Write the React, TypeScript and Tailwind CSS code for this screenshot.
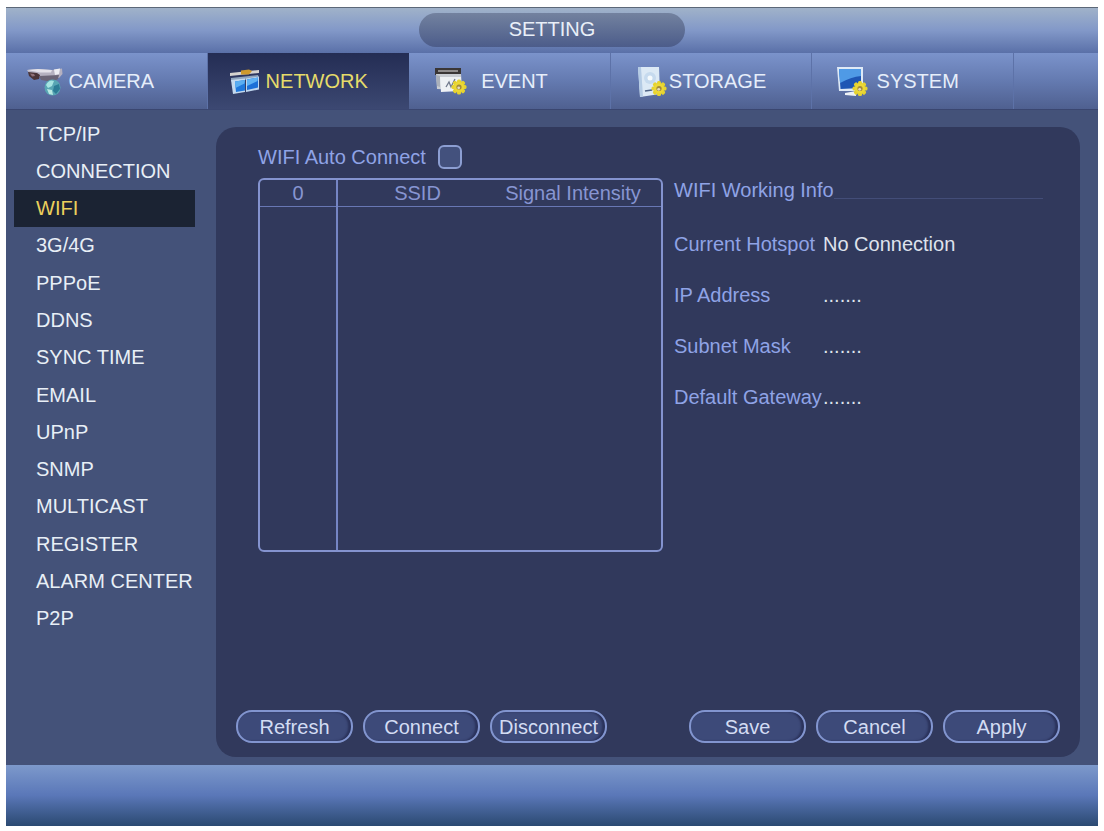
import React, { useState } from 'react';
import { cva } from 'class-variance-authority';
import { clsx } from 'clsx';

function Gear({ x, y }: { x: number; y: number }) {
  return (
    <g transform={`translate(${x} ${y})`}>
      {[0, 45, 90, 135].map((angle) => (
        <rect key={angle} x="-7.5" y="-2" width="15" height="4" rx="1.5" fill="#e6d32f" transform={`rotate(${angle})`} />
      ))}
      <circle r="5" fill="#ecd836" />
      <circle r="2.6" fill="#a08a3c" />
      <circle r="1.4" cx="-0.3" cy="0.8" fill="#e4dcc0" />
    </g>
  );
}

function CameraIcon() {
  return (
    <svg viewBox="0 0 38 34" className="h-[34px] w-[38px] shrink-0" aria-hidden="true">
      <path d="M1 6 L12 5 L26 6 L36 4.5 L36.5 10 L33 14 L17 13 L3 9 Z" fill="#b5b1c0" />
      <path d="M1 6 L12 5 L26 6 L25 8.5 L14 8.5 Z" fill="#e4e2ea" />
      <path d="M2 8 L11 9 L14 11 L13 15 L8 16 L3 12 Z" fill="#4a3438" />
      <path d="M4 9.5 L8 10 L9 12 L6 12.5 Z" fill="#8f7078" />
      <path d="M13 12 L33 11 L32 15 L27 18 L15 16 Z" fill="#6b6577" />
      <path d="M28 5.5 L34 4.5 L33 10 L29 11 Z" fill="#eeeef3" />
      <circle cx="26.5" cy="23.5" r="8" fill="#58a6b4" />
      <path d="M20 21 Q23 15 28 17 L26 22 L22 24 Z" fill="#a6e4e2" />
      <path d="M28 22 L33 20 L34 25 L30 30 L27 27 Z" fill="#2c7c95" />
      <path d="M21 25 L26 26 L27 31 L23 30 Z" fill="#b7e8e2" />
    </svg>
  );
}

function NetworkIcon() {
  return (
    <svg viewBox="0 0 38 34" className="h-[34px] w-[38px] shrink-0" aria-hidden="true">
      <path d="M2 9 L31 6 L31 9 L2 12 Z" fill="#d5d3cf" />
      <path d="M13 6.5 L21 5.5 L24 7 L21 10.5 L13 10.5 Z" fill="#cf9a2c" />
      <path d="M3 14 L30 11 L31 14 L3 17.5 Z" fill="#8ea4bc" />
      <path d="M3 16 L17 14.5 L17 28 L5 30 Z" fill="#c4d9ee" />
      <path d="M7 17.5 L17 16 L17 26.5 L8 28 Z" fill="#1f78dc" />
      <path d="M7 17.5 L17 16 L16.5 19.5 L7.5 24 Z" fill="#5aaef2" />
      <path d="M18 14.5 L31 12.5 L31 25.5 L18 28 Z" fill="#bfd6ee" />
      <path d="M19 15.5 L30 13.5 L30 23.5 L19 26 Z" fill="#1c70d8" />
      <path d="M19 15.5 L30 13.5 L29.5 17 L19 22 Z" fill="#5fb2f4" />
    </svg>
  );
}

function EventIcon() {
  return (
    <svg viewBox="0 0 38 34" className="h-[34px] w-[38px] shrink-0" aria-hidden="true">
      <path d="M6 4 L32 4 L32 11 L6 11 Z" fill="#3a3636" />
      <path d="M9 6 L29 6 L29 8 L9 8 Z" fill="#8f8c8c" />
      <path d="M7 10 L32 10 L33 22 L29 26 L8 25 Z" fill="#c9cdd3" />
      <path d="M11 13 L32 13 L31 27 L12 28 Z" fill="#eef1f4" />
      <path d="M7 11 L11 12 L11 23 L8 22 Z" fill="#aab0ba" />
      <path d="M17 23 L20 18 L22 23 L26 15" stroke="#70798c" strokeWidth="1.3" fill="none" />
      <Gear x={30} y={23} />
    </svg>
  );
}

function StorageIcon() {
  return (
    <svg viewBox="0 0 38 34" className="h-[34px] w-[38px] shrink-0" aria-hidden="true">
      <path d="M7 3 L28 3 L29 30 L9 33 Z" fill="#dce9f5" />
      <path d="M7 3 L10 3 L12 32.5 L9 33 Z" fill="#b4cbe4" />
      <circle cx="19" cy="14" r="6" fill="#c6daee" />
      <circle cx="19" cy="14" r="2.5" fill="#f5fafd" />
      <path d="M14 27 L21 26" stroke="#4d6285" strokeWidth="1.6" />
      <Gear x={28} y={24.5} />
    </svg>
  );
}

function SystemIcon() {
  return (
    <svg viewBox="0 0 38 34" className="h-[34px] w-[38px] shrink-0" aria-hidden="true">
      <path d="M5 3 L31 3 L31 27 L7 27 Z" fill="#dfeaf6" />
      <path d="M7 5 L29 5 L29 24 L8.5 25 Z" fill="#1e56b4" />
      <path d="M7 5 L29 5 L29 12 Q19 13 8 19 Z" fill="#4f9ae6" />
      <path d="M13 29 L24 27 L24 32 L13 31 Z" fill="#eef2f6" />
      <Gear x={28} y={24.5} />
    </svg>
  );
}

const tabs = [
  { name: 'CAMERA', icon: CameraIcon },
  { name: 'NETWORK', icon: NetworkIcon },
  { name: 'EVENT', icon: EventIcon },
  { name: 'STORAGE', icon: StorageIcon },
  { name: 'SYSTEM', icon: SystemIcon },
];

const menuItems = [
  'TCP/IP', 'CONNECTION', 'WIFI', '3G/4G', 'PPPoE', 'DDNS', 'SYNC TIME',
  'EMAIL', 'UPnP', 'SNMP', 'MULTICAST', 'REGISTER', 'ALARM CENTER', 'P2P',
];

const workingInfo = [
  { label: 'Current Hotspot', value: 'No Connection' },
  { label: 'IP Address', value: '.......' },
  { label: 'Subnet Mask', value: '.......' },
  { label: 'Default Gateway', value: '.......' },
];

const tabStyle = cva('flex items-center border-r pl-5 text-left', {
  variants: {
    active: {
      true: 'border-transparent bg-linear-to-b from-[#242d54] to-[#3c4872] text-[#e6dc6a]',
      false: 'border-[#5d72a8] text-[#e6eefa]',
    },
  },
});

function PillButton({ children }: { children: React.ReactNode }) {
  return (
    <button
      type="button"
      className="flex h-[33px] w-[117px] items-center justify-center rounded-2xl border-2 border-[#8295cf] bg-[#3d4a79] text-[#d3dcf3] shadow-[inset_-3px_0_2px_#2b335c] hover:bg-[#47568a]"
    >
      {children}
    </button>
  );
}

export default function App() {
  const [activeTab, setActiveTab] = useState('NETWORK');
  const [activeItem, setActiveItem] = useState('WIFI');
  const [autoConnect, setAutoConnect] = useState(false);

  return (
    <div className="min-h-screen bg-white flex flex-col px-1.5 pt-[7px] pb-[5px] font-['Liberation_Sans',Arial,sans-serif] text-xl leading-6">
      <div className="flex flex-1 flex-col bg-[#445279]">
        {/* Title bar */}
        <header className="flex h-[46px] items-start justify-center border-t border-[#5c6878] bg-linear-to-b from-[#a0b2c9] via-[#8298c8] to-[#5a70a8] pt-[5px]">
          <h1 className="flex h-[34px] w-[266px] items-center justify-center rounded-full bg-linear-to-b from-[#73829f] to-[#4c5c8a] pb-0.5 text-[#e9eff8]">
            SETTING
          </h1>
        </header>

        {/* Tabs */}
        <nav className="grid h-[57px] grid-cols-[repeat(5,minmax(0,1fr))_84px] border-b border-[#3a4670] bg-linear-to-b from-[#7b93cb] via-[#647ab0] to-[#4f6090]">
          {tabs.map((tab) => {
            const Icon = tab.icon;
            return (
              <button
                key={tab.name}
                type="button"
                onClick={() => setActiveTab(tab.name)}
                className={tabStyle({ active: activeTab === tab.name })}
              >
                <Icon />
                <span className="mr-12 flex-1 text-center">{tab.name}</span>
              </button>
            );
          })}
        </nav>

        <div className="flex flex-1">
          {/* Side menu */}
          <nav className="flex w-[210px] shrink-0 flex-col pt-[5px] pr-[21px] pb-32 pl-2">
            {menuItems.map((item) => (
              <button
                key={item}
                type="button"
                onClick={() => setActiveItem(item)}
                className={clsx(
                  'flex flex-1 items-center pl-[22px] whitespace-nowrap',
                  activeItem === item ? 'bg-[#1b2333] text-[#ecd05c]' : 'text-[#e8eff6]'
                )}
              >
                {item}
              </button>
            ))}
          </nav>

          {/* Settings panel */}
          <main className="mt-[17px] mr-[18px] mb-2 flex flex-1 flex-col rounded-[20px] bg-[#31395c] px-5 pt-4 pb-[14px] text-[#8fa3e6]">
            <div className="flex h-7 items-center gap-3 pl-[22px]">
              <label htmlFor="auto-connect">WIFI Auto Connect</label>
              <input
                id="auto-connect"
                type="checkbox"
                checked={autoConnect}
                onChange={(e) => setAutoConnect(e.target.checked)}
                className="size-6 appearance-none rounded-md border-2 border-[#8c9ed2] bg-[#43517d] checked:bg-[#8fa3e6]"
              />
            </div>

            <div className="mt-[7px] mr-[17px] ml-[22px] grid grid-cols-[405fr_369fr] gap-[11px]">
              <div className="h-[374px] rounded-md border-2 border-[#8493cf]">
                <table className="h-full w-full table-fixed border-collapse">
                  <thead>
                    <tr className="h-[26px] border-b border-[#6877b4] text-[#8795d2]">
                      <th className="w-[77px] border-r-2 border-[#7585c4] p-0 font-normal">0</th>
                      <th className="w-[160px] p-0 font-normal">SSID</th>
                      <th className="p-0 pr-3 font-normal whitespace-nowrap">Signal Intensity</th>
                    </tr>
                  </thead>
                  <tbody>
                    <tr>
                      <td className="border-r-2 border-[#7585c4]" />
                      <td />
                      <td />
                    </tr>
                  </tbody>
                </table>
              </div>

              <section>
                <div className="flex h-6 items-end">
                  <h2 className="whitespace-nowrap">WIFI Working Info</h2>
                  <div className="mb-[3px] flex-1 border-b border-[#434d78]" />
                </div>
                <dl className="mt-4">
                  {workingInfo.map((info) => (
                    <div key={info.label} className="flex h-[51px] items-center">
                      <dt className="w-[149px] shrink-0 whitespace-nowrap">{info.label}</dt>
                      <dd className="whitespace-nowrap text-[#dfe3ec]">{info.value}</dd>
                    </div>
                  ))}
                </dl>
              </section>
            </div>

            <div className="mt-auto flex justify-between">
              <div className="flex gap-[10px]">
                <PillButton>Refresh</PillButton>
                <PillButton>Connect</PillButton>
                <PillButton>Disconnect</PillButton>
              </div>
              <div className="flex gap-[10px]">
                <PillButton>Save</PillButton>
                <PillButton>Cancel</PillButton>
                <PillButton>Apply</PillButton>
              </div>
            </div>
          </main>
        </div>

        <footer className="h-[61px] bg-linear-to-b from-[#7d99cb] via-[#5a77b8] to-[#2b4a72]" />
      </div>
    </div>
  );
}
